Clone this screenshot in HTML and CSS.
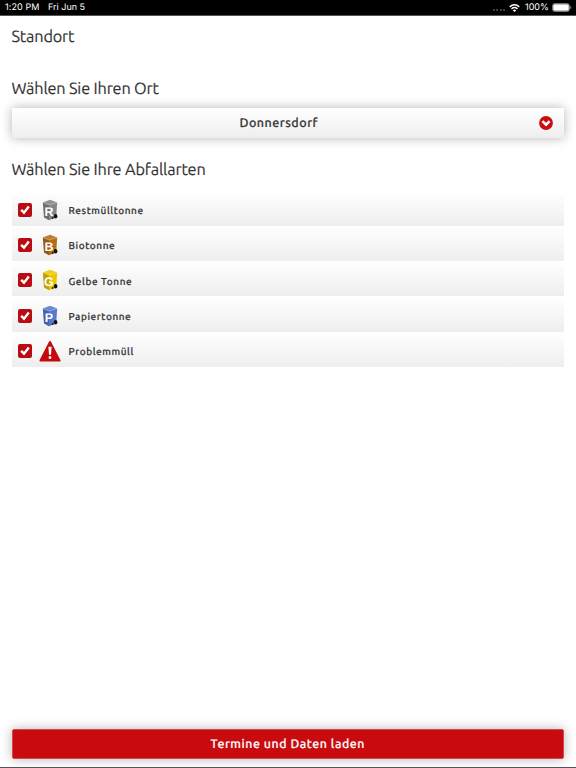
FILE: index.html
```
<!DOCTYPE html>
<html lang="de">
<head>
    <meta charset="UTF-8">
    <meta name="viewport" content="width=device-width, initial-scale=1.0">
    <title>Standort</title>
    <link rel="stylesheet" href="styles.css">
</head>
<body>

    <!-- Shared shapes -->
    <svg class="symbols" width="0" height="0">
        <defs>
            <symbol id="check" viewBox="0 0 14 14">
                <path d="M3.2 6.8 L6 9.7 L10.8 3.5" fill="none" stroke="#fff" stroke-width="2.4"/>
            </symbol>
            <symbol id="bin" viewBox="0 0 16 22">
                <path d="M.8 3.5 L8 .8 L15.2 3.5 L14.2 18.5 L7 21.2 L2 18.5 Z" fill="currentColor"/>
                <path d="M.8 3.5 L8 .8 L15.2 3.5 L7 6 Z" fill="#fff" fill-opacity=".12"/>
                <path d="M.8 3.5 L7 6 L7 21.2 L2 18.5 Z" fill="#000" fill-opacity=".18"/>
                <path d="M.8 3.5 L7 6 L15.2 3.5" fill="none" stroke="#fff" stroke-opacity=".45" stroke-width=".7"/>
                <ellipse cx="13.6" cy="17.2" rx="1.8" ry="2.3" fill="#111"/>
                <circle cx="10.6" cy="19" r="1" fill="#222"/>
            </symbol>
        </defs>
    </svg>

    <div class="status-bar">
        <span class="time">1:20 PM</span>
        <span class="date">Fri Jun 5</span>
        <span class="signal"><i></i><i></i><i></i><i></i></span>
        <svg class="wifi" viewBox="0 0 11 8" width="11" height="8">
            <path d="M.7 2.9 Q5.5 -1.2 10.3 2.9 M2.5 4.9 Q5.5 2.3 8.5 4.9" fill="none" stroke="#fff" stroke-width="1.4"/>
            <path d="M3.8 6.2 Q5.5 4.9 7.2 6.2 L5.5 8 Z" fill="#fff"/>
        </svg>
        <span class="percent">100%</span>
        <svg class="battery" viewBox="0 0 20 9" width="20" height="9">
            <rect x=".5" y=".5" width="17" height="8" rx="2.2" fill="none" stroke="#777"/>
            <rect x="1.2" y="1.2" width="15.6" height="6.6" rx="1.4" fill="#fff"/>
            <path d="M18.7 3.2 V5.8" stroke="#888" stroke-width="1"/>
        </svg>
    </div>

    <main class="page">
        <h1 class="title">Standort</h1>

        <h2 class="place-title">Wählen Sie Ihren Ort</h2>
        <div class="select">
            <span>Donnersdorf</span>
            <svg class="arrow" viewBox="0 0 14 14" width="14" height="14">
                <circle cx="7" cy="7" r="6.9" fill="#c90c0f"/>
                <path d="M3.4 5.2 L7 8.7 L10.6 5.2" fill="none" stroke="#fff" stroke-width="2.5"/>
            </svg>
        </div>

        <h2 class="types-title">Wählen Sie Ihre Abfallarten</h2>
        <ul class="types">
            <li>
                <svg class="checkbox"><use href="#check"/></svg>
                <svg class="icon residual" viewBox="0 0 22 22"><use href="#bin" x="3" width="16" height="22"/><text x="10.2" y="16.6">R</text></svg>
                <span>Restmülltonne</span>
            </li>
            <li>
                <svg class="checkbox"><use href="#check"/></svg>
                <svg class="icon organic" viewBox="0 0 22 22"><use href="#bin" x="3" width="16" height="22"/><text x="10.2" y="16.6">B</text></svg>
                <span>Biotonne</span>
            </li>
            <li>
                <svg class="checkbox"><use href="#check"/></svg>
                <svg class="icon yellow" viewBox="0 0 22 22"><use href="#bin" x="3" width="16" height="22"/><text x="10.2" y="16.6">G</text></svg>
                <span>Gelbe Tonne</span>
            </li>
            <li>
                <svg class="checkbox"><use href="#check"/></svg>
                <svg class="icon paper" viewBox="0 0 22 22"><use href="#bin" x="3" width="16" height="22"/><text x="10.2" y="16.6">P</text></svg>
                <span>Papiertonne</span>
            </li>
            <li>
                <svg class="checkbox"><use href="#check"/></svg>
                <svg class="icon" viewBox="0 0 22 22">
                    <path d="M11 2 L20.6 20.6 H1.4 Z" fill="#c4090d" stroke="#c4090d" stroke-width="2" stroke-linejoin="round"/>
                    <path d="M9.4 6.8 H12.6 L12 14.8 H10 Z" fill="#fff"/>
                    <rect x="9.7" y="16.2" width="2.6" height="2.6" rx=".6" fill="#fff"/>
                </svg>
                <span>Problemmüll</span>
            </li>
        </ul>

        <button class="load-button" type="button">Termine und Daten laden</button>
    </main>

</body>
</html>
```
FILE: styles.css
```
* {
    box-sizing: border-box;
}

body {
    display: flex;
    flex-direction: column;
    height: 768px;
    margin: 0;
    overflow: hidden;
    background-color: #fff;
    border-bottom: 1px solid #555;
    color: #333;
    font-family: Ubuntu, "Noto Sans", sans-serif;
    text-rendering: geometricPrecision;
}

.symbols {
    position: absolute;
}

.status-bar {
    display: flex;
    align-items: center;
    flex: none;
    height: 16px;
    padding: 0 4px 0 5px;
    background-color: #000;
    border-bottom: 1px solid #555;
    color: #fff;
    font: 9px/15px Inter, sans-serif;
}

.time {
    width: 43px;
    letter-spacing: 0.1px;
}

.signal {
    display: flex;
    gap: 1.4px;
    margin: 5px 4px 0 auto;
}

.signal i {
    width: 2px;
    height: 2px;
    border-radius: 50%;
    background-color: #555;
}

.wifi {
    margin-right: 1px;
}

.percent {
    width: 23px;
    margin: 0 4px;
}

.page {
    display: flex;
    flex-direction: column;
    flex: 1;
    padding: 0 12px 8.5px 11.5px;
}

h1,
h2 {
    margin: 0;
    font-size: 16.3px;
    font-weight: 400;
    letter-spacing: -0.17px;
    line-height: 24px;
    -webkit-text-stroke: 0.15px #333;
}

.title {
    margin-top: 9px;
}

.place-title {
    margin-top: 28px;
}

.select {
    display: flex;
    align-items: center;
    justify-content: center;
    position: relative;
    height: 30px;
    margin-top: 6.5px;
    padding: 1px 18px 0 0;
    background-image: linear-gradient(#fff, #eee);
    box-shadow: 0 0 11px rgba(0, 0, 0, 0.3);
    font-size: 12.5px;
    font-weight: 500;
    letter-spacing: 0.5px;
    -webkit-text-stroke: 0.2px #333;
}

.arrow {
    position: absolute;
    top: 8px;
    right: 11px;
}

.types-title {
    margin-top: 20.5px;
}

.types {
    margin: 8.5px 0 0;
    padding: 0;
    list-style: none;
}

.types li {
    display: flex;
    align-items: center;
    height: 35.3px;
    padding: 3px 0 0 6.5px;
    background-image: linear-gradient(#fff, #eee);
    font-size: 10px;
    font-weight: 500;
    letter-spacing: 0.58px;
}

.types span {
    padding-top: 2px;
    -webkit-text-stroke: 0.2px #333;
}

.checkbox {
    width: 14px;
    height: 14px;
    margin-right: 7px;
    border-radius: 2px;
    background-color: #b90b12;
}

.icon {
    width: 22px;
    height: 22px;
    margin-right: 7.5px;
}

.icon text {
    fill: #fff;
    font: 700 12.5px "Liberation Sans", sans-serif;
    text-anchor: middle;
}

.residual {
    color: #858585;
}

.organic {
    color: #b56a16;
}

.yellow {
    color: #edc500;
}

.paper {
    color: #5579cc;
}

.load-button {
    height: 30px;
    margin-top: auto;
    padding: 2px 0 0;
    background-color: #c90b0f;
    border: 1px solid #d9474a;
    border-radius: 2px;
    box-shadow: 0 0 11px rgba(0, 0, 0, 0.3);
    color: #fff;
    font-family: inherit;
    font-size: 12.3px;
    font-weight: 500;
    letter-spacing: 0.56px;
    text-rendering: inherit;
    -webkit-text-stroke: 0.2px #fff;
}
```
